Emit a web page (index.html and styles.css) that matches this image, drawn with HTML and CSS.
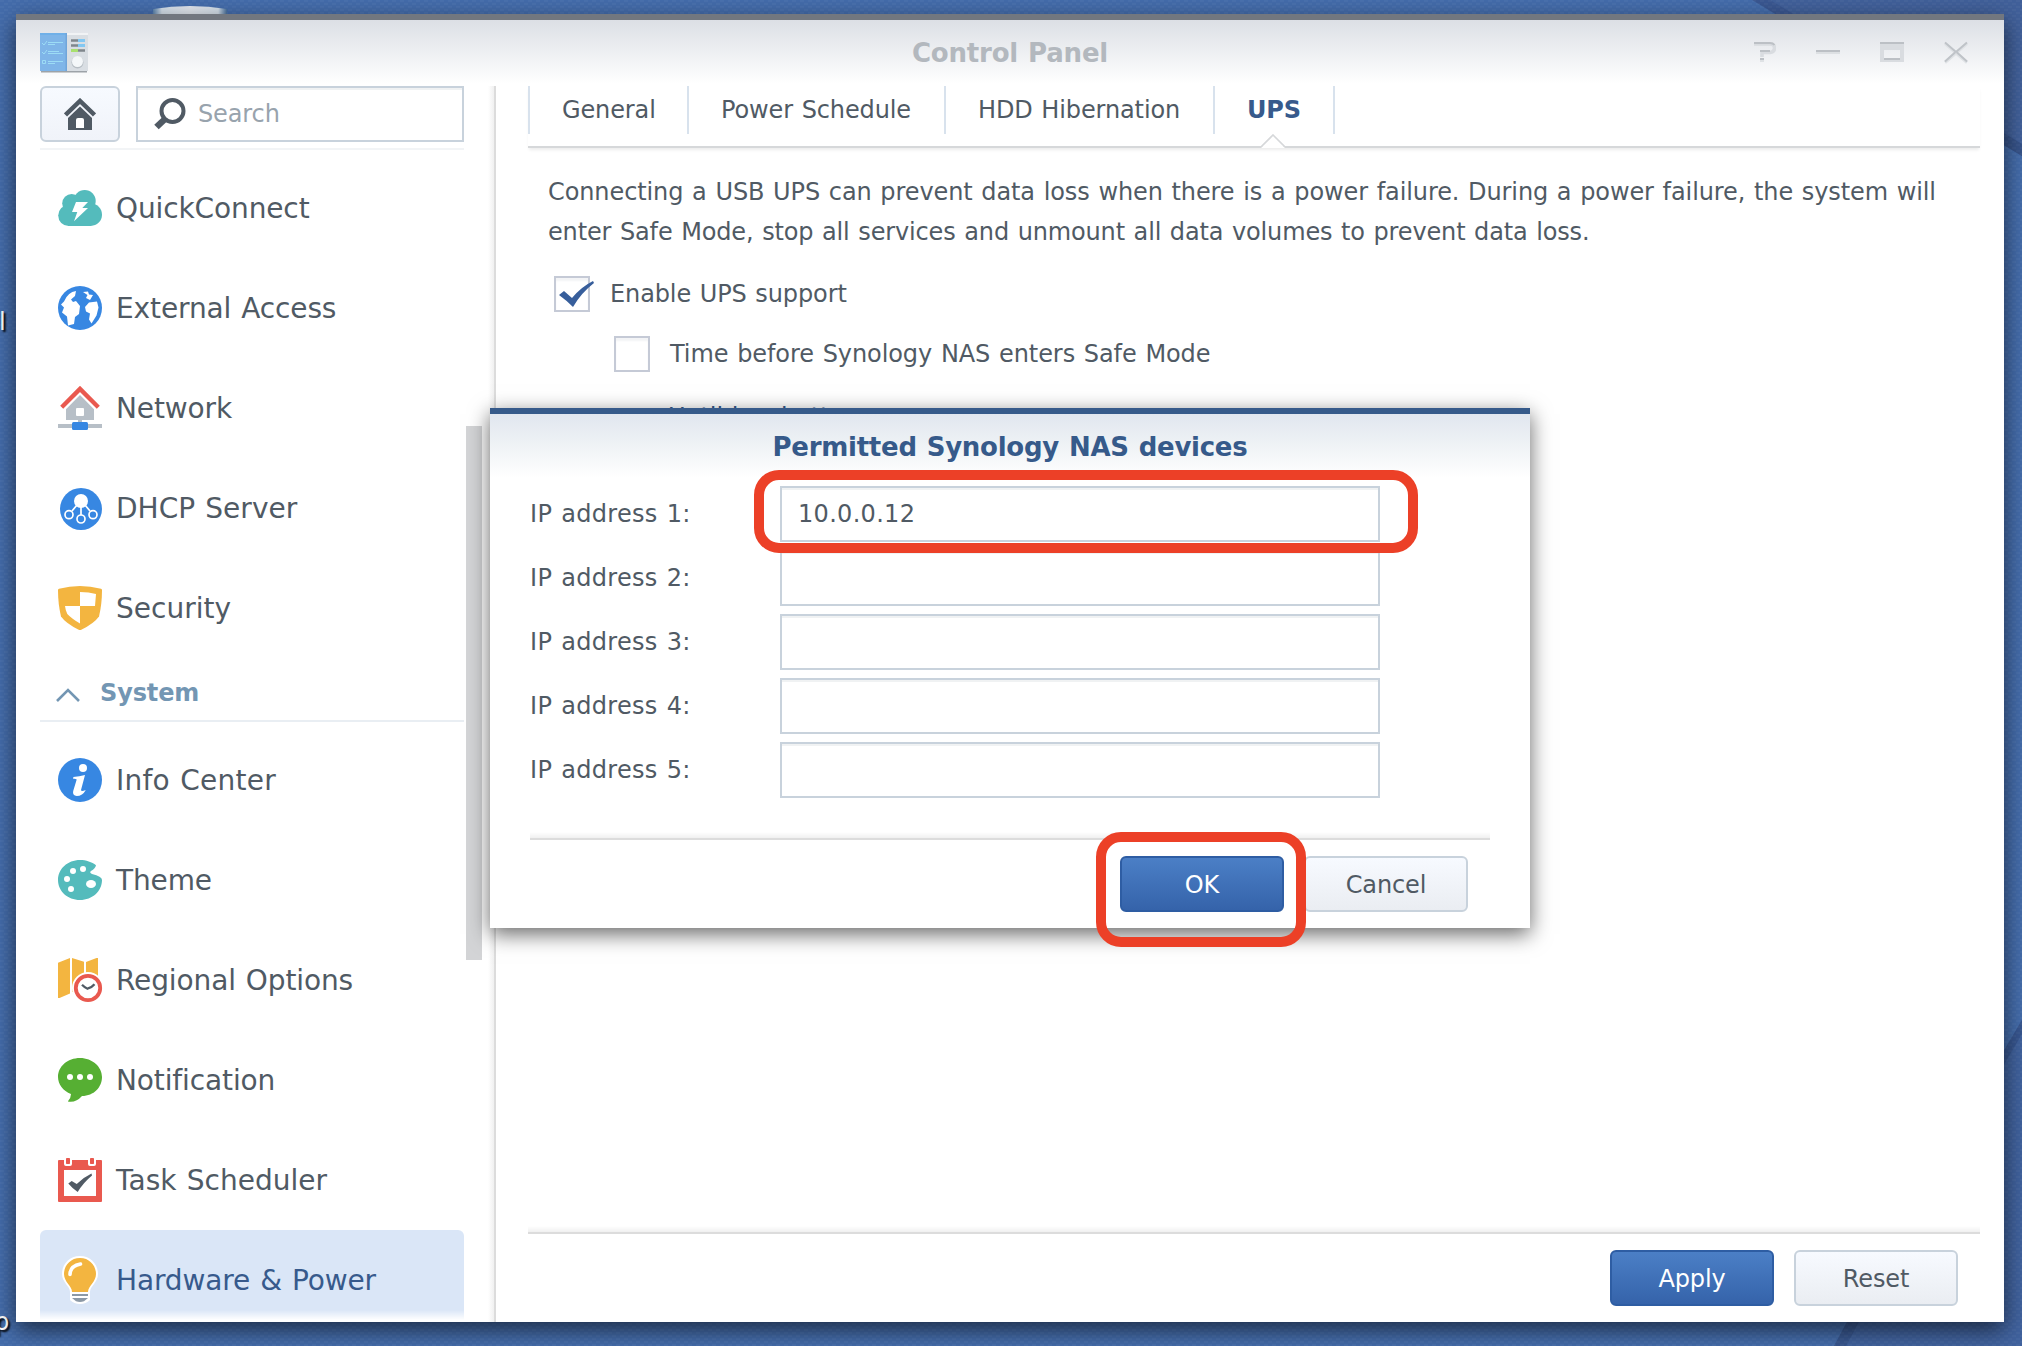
FILE: index.html
```html
<!DOCTYPE html>
<html lang="en">
<head>
<meta charset="utf-8">
<title>Control Panel</title>
<link rel="stylesheet" href="styles.css">
</head>
<body>
<div class="desktop">
  <svg class="wallpaper" viewBox="0 0 2022 1346">
    <defs>
      <pattern id="weave" width="8" height="6" patternUnits="userSpaceOnUse">
        <path d="M0 1h4M4 4h4" stroke="#fff" stroke-opacity=".03" stroke-width="2"/>
      </pattern>
      <linearGradient id="dish" x1="0" x2="1"><stop stop-color="#5b83ad"/><stop offset=".12" stop-color="#d5e0ea"/><stop offset=".5" stop-color="#e2e7ee"/><stop offset=".88" stop-color="#d5e0ea"/><stop offset="1" stop-color="#466e9b"/></linearGradient>
    </defs>
    <rect width="2022" height="1346" fill="#446cab"/>
    <path d="M1768 0L2022 156V0z" fill="#41609a"/>
    <path d="M1752 0h18l30 18h-18z" fill="#3a5791"/>
    <path d="M2002 132l20 12v12l-20-12z" fill="#365389"/>
    <path d="M2022 1020l-20 34v292h20z" fill="#40629e"/>
    <path d="M2022 1020l-20 34v14l20-34z" fill="#375690"/>
    <path d="M1848 1320l-14 26h188v-26z" fill="#40629e"/>
    <path d="M1848 1320l-14 26h12l14-26z" fill="#385790"/>
    <rect width="2022" height="1346" fill="url(#weave)"/>
    <path d="M153 14V9Q190 3 227 9v5z" fill="url(#dish)"/>
  </svg>
  <span class="desk-label desk-label-top">l</span>
  <span class="desk-label desk-label-bottom">p</span>

  <main class="window">
    <header class="titlebar">
      <svg class="app-icon" viewBox="0 0 48 40">
        <path d="M1 38.500h46" stroke="#9da3a8" stroke-width="2"/>
        <path d="M0 0h27v38H0z" fill="#7fb5e8"/><path d="M27 0h21v38H27z" fill="#d9dee3"/>
        <path d="M27 0h21v2H27z" fill="#f1f3f5"/><path d="M0 0h27v2H0z" fill="#70b0e8"/><path d="M25.500 0h1.500v38h-1.500z" fill="#70a5da"/>
        <path d="M2 10l2 2 3-4M2 19l2 2 3-4M2.500 27.500h3v3h-3zM8 9.500h15M8 11.500h7M8 18.500h11M8 20.500h15M8 28.500h15M8 30.500h7" fill="none" stroke="#9cdcf5" stroke-width="1"/>
        <path d="M31 7.500h7M31 12.500h7M38 17.500h7" stroke="#7f868c" stroke-width="2.500"/>
        <path d="M38 7.500h7M38 12.500h7" stroke="#83c8f2" stroke-width="3"/><path d="M31 17.500h7" stroke="#a8e070" stroke-width="3"/>
        <circle cx="37.500" cy="29.500" r="6" fill="#b7bec4"/><circle cx="37.500" cy="28.500" r="5.500" fill="#f4f7f9"/>
      </svg>
      <h1>Control Panel</h1>
      <div class="controls">
        <svg viewBox="0 0 24 24"><path d="M2 4h16q4.500 0 4.500 4T18 12.500H10V17" fill="none" stroke="#d9dce0" stroke-width="3.600"/><path d="M2 3h16q3 0 4.500 2M8 11h10M8 19h4" fill="none" stroke="#bcc0c5" stroke-width="2"/><path d="M8 20h4v2H8z" fill="#dfe2e5"/></svg>
        <svg viewBox="0 0 24 24"><path d="M0 13h24" stroke="#dde0e3" stroke-width="2"/><path d="M0 11h24" stroke="#bcc0c5" stroke-width="2"/></svg>
        <svg viewBox="0 0 24 24"><path d="M0 2h24v20H0zM4 10v8h16v-8z" fill="#d9dce0" fill-rule="evenodd"/><path d="M0 3h24M4 19h16" stroke="#bcc0c5" stroke-width="2"/></svg>
        <svg viewBox="0 0 24 24"><path d="M1 3.500l22 19M23 3.500l-22 19" stroke="#dfe2e5" stroke-width="3"/><path d="M1 2.500l11 9.500 11-9.500M1 21.500l10-9M23 21.500l-10-9" fill="none" stroke="#bfc3c8" stroke-width="2"/></svg>
      </div>
    </header>

    <div class="body">
      <aside class="sidebar">
        <div class="tools">
          <button class="home"><svg viewBox="0 0 32 32"><path d="M1.500 17L16 3l14.500 14" fill="none" stroke="#505a64" stroke-width="4.500"/><path d="M4 20L16 8.500 28 20v12H4z" fill="#505a64"/><path d="M12 30v-8q0-2 2-2h4q2 0 2 2v8z" fill="#fff"/></svg></button>
          <div class="search"><svg viewBox="0 0 36 36"><circle cx="20.500" cy="15" r="11" fill="none" stroke="#505a64" stroke-width="4"/><path d="M12.500 23.500L4.500 31" stroke="#505a64" stroke-width="6.500"/></svg><span>Search</span></div>
        </div>
        <div class="scroller">
          <ul class="nav">
            <li><svg viewBox="0 0 48 48"><g fill="#54bbbc"><circle cx="28.700" cy="17" r="11"/><circle cx="15.700" cy="19.500" r="9.500"/><circle cx="12.700" cy="31.500" r="10.500"/><circle cx="34.800" cy="30.700" r="11.200"/><path d="M12 18h23v24H12z"/></g><path d="M20 18h12l-5.700 6H32L18 37.300 21.300 28H16z" fill="#fff"/></svg><span>QuickConnect</span></li>
            <li><svg viewBox="0 0 48 48"><circle cx="24" cy="24" r="22" fill="#3787e2"/><path d="M8 17.500Q12 8 20 7l-1 5-4 3.500 2 2.500 3-1 4 5-1 8-4 3-1 7-6 1.500-1-9-5-4 2-5-3-3zM29 23l4-4.500 8-1 1.500 6-2 8-5 8-2.500-4 1-6-4-2zM27 8l5-.5 1 3 4 .5-3 5-4-2 1.500-3z" fill="#fff"/></svg><span>External Access</span></li>
            <li><svg viewBox="0 0 48 48"><path d="M5.700 23.300L24 4.900l18.300 18.400" fill="none" stroke="#e9594f" stroke-width="4.300"/><path d="M10 25.300L24 11l14 14.300V36H26v4h20v4H2v-4h20v-4H10z" fill="#b7bfc7"/><rect x="20" y="24" width="8" height="8" rx="1" fill="#fff"/><rect x="16" y="38" width="16" height="8" rx="1.500" fill="#3787e2"/></svg><span>Network</span></li>
            <li><svg viewBox="0 0 48 48"><circle cx="25" cy="25" r="21" fill="#3787e2"/><circle cx="25" cy="17" r="7" fill="#fff"/><g fill="none" stroke="#fff" stroke-width="1.700"><path d="M21 21l-5 6M25 21v10M29 21l5 6"/><circle cx="13" cy="30.700" r="4"/><circle cx="25" cy="35" r="4"/><circle cx="37" cy="30.700" r="4"/></g></svg><span class="looser">DHCP Server</span></li>
            <li><svg viewBox="0 0 48 48"><path d="M2 6q0-1 1-1.300 21-5.300 42 0 1 .3 1 1.300 0 14-3 26.500Q38 39.500 25.300 45.700q-1.300.6-2.600 0Q10 39.500 5 32.500 2 20 2 6z" fill="#f3b540"/><path d="M24 8q9 0 16 2l-1 12H24zM9 22h15v17.500Q15.500 34.500 11.300 30 9.500 26.500 9 22z" fill="#fff"/></svg><span class="looser">Security</span></li>
          </ul>
          <div class="group"><svg viewBox="0 0 24 14"><path d="M1 13L12 2l11 11" fill="none" stroke="#7396b3" stroke-width="2.600"/></svg><span>System</span></div>
          <ul class="nav">
            <li><svg viewBox="0 0 48 48"><circle cx="24" cy="24" r="22" fill="#3787e2"/><circle cx="27" cy="12" r="4" fill="#fff"/><path d="M17.300 21q6-.5 11.700-2l-4 15q0 2 4.800 0-3.300 6-9 6-4.600-.5-3.600-5l3.500-11.500q-1.500-1-3.400-.5z" fill="#fff"/></svg><span class="loose">Info Center</span></li>
            <li><svg viewBox="0 0 48 48"><path d="M40 9.300C36 6 30 4 24 4 11.500 4 2 13 2 24s9.500 20 22 20 22-9 22-20q0-3.500-10-6-3-1.500-1-3 4.500-2.500 5-5.700z" fill="#54bbbc"/><g fill="#fff"><circle cx="27" cy="13" r="3"/><circle cx="17" cy="15" r="3"/><circle cx="11" cy="23" r="3"/><circle cx="15" cy="33" r="3"/><ellipse cx="35" cy="28" rx="5" ry="4"/></g></svg><span>Theme</span></li>
            <li><svg viewBox="0 0 48 48"><path d="M2 6.700L14 2v35.500L3.500 42H2zM16 2l12 3.700V36H16zM30 6l10.500-4H42v26H30z" fill="#f3b540"/><circle cx="32" cy="32" r="16" fill="#fff"/><circle cx="32" cy="32" r="12.200" fill="#fff" stroke="#e9594f" stroke-width="3.800"/><path d="M26 28.700q3 3 5.500 4 4-1 7-4.500" fill="none" stroke="#505a64" stroke-width="2.300"/></svg><span>Regional Options</span></li>
            <li><svg viewBox="0 0 48 48"><path d="M24 2C11.500 2 2 10.500 2 21c0 7 5 14 13 17q0 4-3.200 7.500Q20 47 26 40c12 0 20-9 20-19S36.500 2 24 2z" fill="#56af33"/><g fill="#fff"><circle cx="14" cy="21" r="3"/><circle cx="24" cy="21" r="3"/><circle cx="34" cy="21" r="3"/></g></svg><span>Notification</span></li>
            <li><svg viewBox="0 0 48 48"><rect x="2" y="4" width="44" height="42" rx="1" fill="#e9594f"/><path d="M8 14h32v26H8zM8 4h8v4q0 2-2 2h-4q-2 0-2-2zM32 4h8v4q0 2-2 2h-4q-2 0-2-2z" fill="#fff"/><rect x="10" y="2" width="4" height="6" rx=".7" fill="#e9594f"/><rect x="34" y="2" width="4" height="6" rx=".7" fill="#e9594f"/><path d="M12.300 27.500l3.400-2.500 5 3Q28 21 35.500 17.500l.5 2Q27 27 21.700 36 16 32 12.300 27.500z" fill="#505a64"/></svg><span class="looser">Task Scheduler</span></li>
            <li class="selected"><svg viewBox="0 0 48 48"><path d="M24 0C13 0 6 8.500 6 18c0 8.500 8 12 8 18v8q4 4 10 4t10-4v-8c0-6 8-9.500 8-18C42 8.500 35 0 24 0z" fill="#fff"/><path d="M24 2c-9.500 0-16 7.500-16 16 0 8 8 12 8 18h16c0-6 8-10 8-18 0-8.500-6.500-16-16-16z" fill="#f3b540"/><path d="M16 38h16v2H16zM16 42h16l-4 3.300q-4 1.200-8 0z" fill="#8c99a6"/><path d="M14 18.500q0-8.500 10.500-10.500" fill="none" stroke="#fff" stroke-width="3.600" stroke-linecap="round"/></svg><span>Hardware &amp; Power</span></li>
          </ul>
        </div>
      </aside>
      <div class="gutter"><div class="thumb"></div></div>

      <section class="content">
        <nav class="tabs">
          <a class="tab tab-general">General</a>
          <a class="tab tab-schedule">Power Schedule</a>
          <a class="tab tab-hdd">HDD Hibernation</a>
          <a class="tab tab-ups active">UPS<svg class="notch" viewBox="0 0 24 14"><path d="M0 14L12 1l12 13z" fill="#fff"/><path d="M0 13L12 1l12 12" fill="none" stroke="#d6d8da" stroke-width="1.600"/></svg></a>
        </nav>
        <div class="form">
          <p><span class="line1">Connecting a USB UPS can prevent data loss when there is a power failure. During a power failure, the system will</span><br><span class="line2">enter Safe Mode, stop all services and unmount all data volumes to prevent data loss.</span></p>
          <label class="check"><span class="box"><svg viewBox="0 0 40 36"><path d="M3 19l5-4 8 7Q25 11 37 5l1 2Q25 17 17 31 10 24 3 19z" fill="#375e9b"/></svg></span>Enable UPS support</label>
          <label class="check indent"><span class="box"></span>Time before Synology NAS enters Safe Mode</label>
          <div class="sub">Until low battery</div>
        </div>
        <footer class="actions"><button class="btn primary">Apply</button><button class="btn">Reset</button></footer>
      </section>
    </div>
  </main>

  <section class="dialog">
    <h2>Permitted Synology NAS devices</h2>
    <div class="fields">
      <div class="field"><label>IP address 1:</label><div class="input">10.0.0.12</div></div>
      <div class="field"><label>IP address 2:</label><div class="input"></div></div>
      <div class="field"><label>IP address 3:</label><div class="input"></div></div>
      <div class="field"><label>IP address 4:</label><div class="input"></div></div>
      <div class="field"><label>IP address 5:</label><div class="input"></div></div>
    </div>
    <footer class="dialog-actions"><button class="btn primary">OK</button><button class="btn">Cancel</button></footer>
  </section>
  <div class="mark mark-field"></div>
  <div class="mark mark-ok"></div>
</div>
</body>
</html>
```
FILE: styles.css
```css
* { box-sizing: border-box; }
body { margin: 0; overflow: hidden; }
.desktop {
  position: relative;
  width: 2022px;
  height: 1346px;
  overflow: hidden;
  font-family: "DejaVu Sans", Verdana, sans-serif;
  font-size: 24px;
  letter-spacing: -.12px;
  word-spacing: 1.2px;
  color: #505a64;
}
h1, h2, p, ul { margin: 0; padding: 0; }
svg { display: block; flex: none; }
.wallpaper { position: absolute; inset: 0; width: 2022px; height: 1346px; }
.desk-label { position: absolute; color: #fff; line-height: 30px; text-shadow: 2px 2px 2px #000; }
.desk-label-top { left: -1px; top: 307px; }
.desk-label-bottom { left: -6px; top: 1307px; }

.window {
  position: absolute;
  left: 16px;
  top: 14px;
  width: 1988px;
  height: 1308px;
  display: flex;
  flex-direction: column;
  background: linear-gradient(#dcdfe5, #fff 64px) #fff;
  border-top: 6px solid #72777f;
  background-clip: padding-box;
  box-shadow: 0 8px 22px rgba(0, 0, 0, .6);
}
.titlebar {
  flex: none;
  height: 66px;
  padding: 0 36px 0 24px;
  display: grid;
  grid-template-columns: 262px 1fr 250px;
}
.app-icon { width: 48px; height: 40px; margin-top: 13px; }
h1 {
  font-size: 26px;
  line-height: 66px;
  text-align: center;
  color: #b3b8be;
  letter-spacing: -.2px;
}
.controls { display: flex; gap: 40px; justify-content: flex-end; padding-top: 20px; }
.controls svg { width: 24px; height: 24px; }

.body { flex: 1; display: flex; min-height: 0; }
.sidebar { width: 448px; padding-left: 24px; display: flex; flex-direction: column; }
.tools {
  height: 64px;
  display: flex;
  gap: 16px;
  border-bottom: 2px solid #f2f4f6;
}
button { font: inherit; color: inherit; letter-spacing: inherit; padding: 0; }
.home {
  width: 80px;
  height: 56px;
  display: flex;
  align-items: center;
  justify-content: center;
  border: 2px solid #c8d2dc;
  border-radius: 6px;
  background: linear-gradient(#f7faff, #f0f3f9);
}
.home svg { width: 32px; height: 32px; }
.search {
  flex: 1;
  height: 56px;
  display: flex;
  align-items: center;
  gap: 10px;
  padding-left: 14px;
  border: 2px solid #c8d2dc;
  box-shadow: inset 0 2px #f0f2f3;
  color: #98a3ad;
}
.search svg { width: 36px; height: 36px; }
.scroller {
  flex: 1;
  min-height: 0;
  padding-top: 8px;
  overflow: hidden;
  position: relative;
}
.scroller::after {
  content: "";
  position: absolute;
  left: 0;
  right: 0;
  bottom: 0;
  height: 12px;
  background: linear-gradient(rgba(255, 255, 255, 0), #fff 10px);
}
.nav { list-style: none; font-size: 28px; }
.nav li {
  height: 100px;
  padding: 0 0 0 16px;
  display: flex;
  align-items: center;
  gap: 12px;
}
.nav svg { width: 48px; height: 48px; }
.nav .selected { background: #dae6f7; border-radius: 6px; color: #375a8c; }
.nav .loose { letter-spacing: .24px; }
.nav .looser { letter-spacing: .03px; }
.group {
  height: 64px;
  margin-bottom: 8px;
  padding: 8px 0 0 16px;
  display: flex;
  align-items: center;
  gap: 20px;
  border-bottom: 2px solid #e9eef3;
  color: #7396b3;
  font-size: 24px;
  font-weight: bold;
}
.group svg { width: 24px; height: 14px; margin-top: 3px; }
.gutter {
  width: 32px;
  border-right: 2px solid #dcdcdc;
  background: linear-gradient(to left, #f0f0f0, #fff 6px);
}
.thumb { width: 16px; height: 534px; margin: 340px 0 0 2px; background: #d3d4d6; }

.content {
  flex: 1;
  padding: 0 24px 0 32px;
  display: flex;
  flex-direction: column;
}
.tabs {
  flex: none;
  height: 62px;
  display: flex;
  border-bottom: 2px solid #d6d8da;
  box-shadow: 0 3px 3px -1px rgba(0, 0, 0, .08);
}
.tab {
  position: relative;
  height: 48px;
  line-height: 48px;
  padding-left: 32px;
  border-left: 2px solid #d8e2ed;
  white-space: nowrap;
}
.tab-general { width: 159px; }
.tab-schedule { width: 257px; }
.tab-hdd { width: 269px; }
.tab-ups { width: 122px; border-right: 2px solid #d8e2ed; }
.active { color: #375a8c; font-weight: bold; }
.notch { position: absolute; left: 46px; top: 48px; width: 24px; height: 14px; }
.form { flex: 1; padding: 24px 0 0 20px; }
p { line-height: 40px; white-space: nowrap; }
.line1 { letter-spacing: -.1px; }
.line2 { letter-spacing: -.15px; }
.check {
  width: max-content;
  height: 36px;
  margin: 24px 0 0 6px;
  display: flex;
  align-items: center;
  gap: 20px;
  line-height: 34px;
}
.indent { margin: 24px 0 0 66px; letter-spacing: -.08px; }
.box { width: 36px; height: 36px; border: 2px solid #c5cad6; box-shadow: inset 0 3px 2px #f3f4f6; }
.box svg { width: 40px; height: 36px; margin-top: -2px; }
.sub { margin: 28px 0 0 120px; line-height: 34px; color: #365a8a; }
.actions, .dialog-actions {
  position: relative;
  flex: none;
  display: flex;
  justify-content: flex-end;
  gap: 20px;
  padding-top: 16px;
  border-top: 2px solid #dcdcdc;
}
.actions { height: 90px; padding-right: 22px; }
.actions::before, .dialog-actions::before {
  content: "";
  position: absolute;
  left: 0;
  right: 0;
  top: -8px;
  height: 6px;
  background: linear-gradient(rgba(0, 0, 0, 0), rgba(0, 0, 0, .06));
}
.btn {
  width: 164px;
  height: 56px;
  padding-top: 2px;
  border: 2px solid #c8d2dc;
  border-radius: 6px;
  background: linear-gradient(#f7faff, #eaedf2);
}
.primary {
  color: #fff;
  border-color: #2e5da3;
  background: linear-gradient(#4b7fc6, #3563aa);
}

.dialog {
  position: absolute;
  left: 490px;
  top: 408px;
  width: 1040px;
  height: 520px;
  padding: 0 40px;
  display: flex;
  flex-direction: column;
  border-top: 6px solid #365a8a;
  background: linear-gradient(#e1e6ef, #eef2f5 30px, #fff 64px) #fff;
  background-clip: padding-box;
  box-shadow: 0 6px 20px rgba(0, 0, 0, .6);
}
h2 {
  height: 72px;
  font-size: 26px;
  line-height: 66px;
  letter-spacing: -.27px;
  text-align: center;
  color: #365a8a;
}
.fields { flex: 1; display: flex; flex-direction: column; gap: 8px; letter-spacing: .3px; }
.field { display: flex; height: 56px; line-height: 56px; }
.field label { width: 250px; }
.input {
  width: 600px;
  padding-left: 16px;
  line-height: 52px;
  border: 2px solid #c8d2dc;
  box-shadow: inset 0 2px #f0f2f3;
}
.dialog-actions { height: 90px; padding-right: 22px; }
.mark { position: absolute; border: 10px solid #ec4027; border-radius: 25px; }
.mark-field { left: 754px; top: 470px; width: 664px; height: 83px; }
.mark-ok { left: 1096px; top: 832px; width: 210px; height: 115px; }
```
